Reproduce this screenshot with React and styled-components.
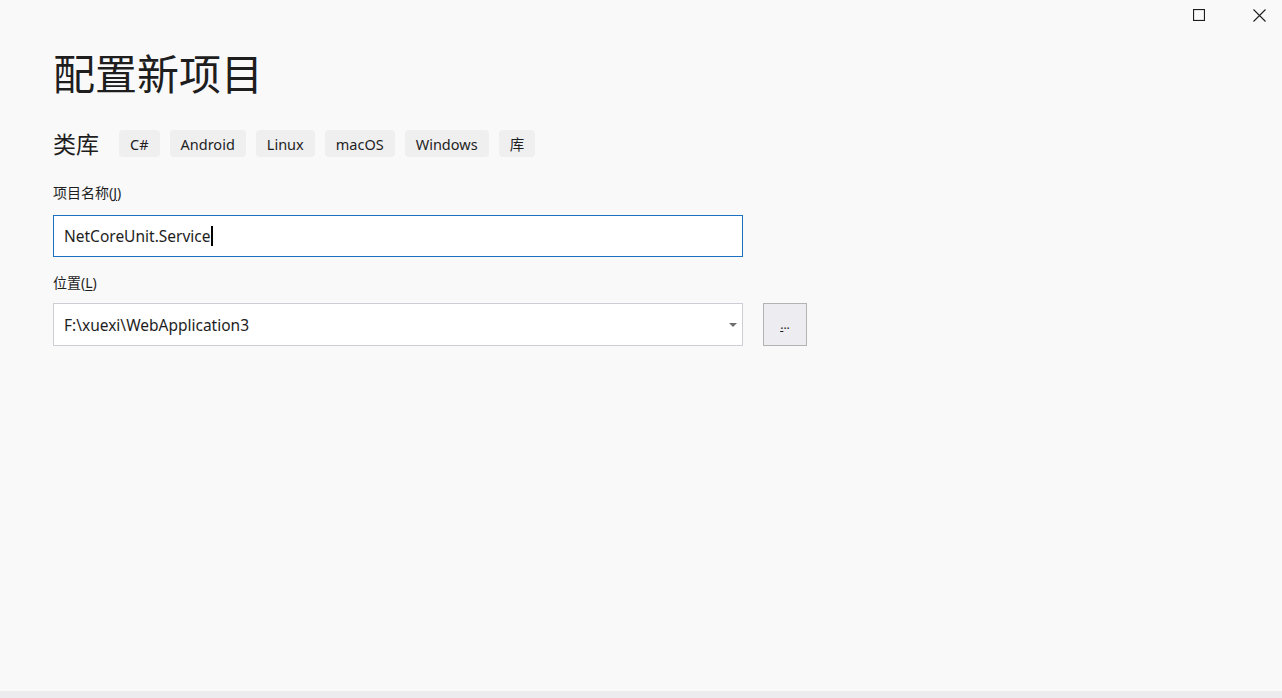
import React from "react";
import styled, { createGlobalStyle } from "styled-components";

const GlobalStyle = createGlobalStyle`
  html, body {
    margin: 0;
    padding: 0;
    background: #f9f9fa;
  }
  body {
    font-family: "Noto Sans", "Noto Sans CJK SC", sans-serif;
    color: #1e1e1e;
  }
`;

const Window = styled.div`
  width: 1282px;
  height: 698px;
  background: #f9f9fa;
  position: relative;
  display: flex;
  flex-direction: column;
  overflow: hidden;
`;

const TitleBar = styled.div`
  position: absolute;
  top: 0;
  right: 0;
  display: flex;
  gap: 14px;
`;

const WinButton = styled.div`
  width: 46px;
  height: 30px;
  display: flex;
  align-items: center;
  justify-content: center;
  color: #1e1e1e;
`;

const Content = styled.div`
  flex: 1;
  padding: 42px 0 0 53px;
  display: flex;
  flex-direction: column;
`;

const Heading = styled.h1`
  margin: 0;
  font-family: "Noto Sans CJK SC", sans-serif;
  font-weight: 400;
  font-size: 42px;
  line-height: 60px;
  color: #1e1e1e;
`;

const TagRow = styled.div`
  display: flex;
  align-items: center;
  gap: 10px;
  margin-top: 28px;
`;

const Category = styled.span`
  font-family: "Noto Sans CJK SC", sans-serif;
  font-size: 23px;
  line-height: 27px;
  margin-right: 10px;
`;

const Tag = styled.span`
  height: 27px;
  padding: 0 11px;
  display: inline-flex;
  align-items: center;
  background: #efeff0;
  border-radius: 4px;
  font-size: 14.5px;
  color: #1e1e1e;
`;

const Label = styled.div`
  font-family: "Noto Sans", "Noto Sans CJK SC", sans-serif;
  font-size: 14px;
  line-height: 20px;
  margin-top: ${(p) => p.$top}px;
  color: #1e1e1e;

  u {
    text-decoration: underline;
    text-underline-offset: 2px;
  }
`;

const FieldRow = styled.div`
  display: flex;
  align-items: center;
  gap: 20px;
  margin-top: ${(p) => p.$top}px;
`;

const Input = styled.div`
  width: 690px;
  height: ${(p) => p.$h}px;
  box-sizing: border-box;
  background: #ffffff;
  border: 1px solid ${(p) => (p.$focused ? "#1b71c2" : "#cdcdd5")};
  display: flex;
  align-items: center;
  padding: 0 10px;
  font-size: 15.5px;
  color: #1e1e1e;
  position: relative;
`;

const Caret = styled.span`
  display: inline-block;
  width: 2px;
  height: 20px;
  background: #000;
`;

const Arrow = styled.span`
  position: absolute;
  right: 5px;
  top: 50%;
  margin-top: -2px;
  width: 0;
  height: 0;
  border-left: 4px solid transparent;
  border-right: 4px solid transparent;
  border-top: 4px solid #6e6e6e;
`;

const BrowseButton = styled.button`
  width: 44px;
  height: 43px;
  box-sizing: border-box;
  background: #ececf1;
  border: 1px solid #b3b3b3;
  font-family: "Noto Sans", sans-serif;
  font-size: 12px;
  color: #1e1e1e;
  padding: 0;
  display: flex;
  align-items: center;
  justify-content: center;

  u {
    text-underline-offset: 2px;
  }
`;

const BottomStrip = styled.div`
  height: 7px;
  background: #ececef;
`;

const tags = ["C#", "Android", "Linux", "macOS", "Windows", "库"];

export default function App() {
  return (
    <>
      <GlobalStyle />
      <Window>
        <TitleBar>
          <WinButton>
            <svg width="12" height="12" viewBox="0 0 12 12">
              <rect x="0.5" y="0.5" width="11" height="11" fill="none" stroke="#1e1e1e" strokeWidth="1.2" />
            </svg>
          </WinButton>
          <WinButton>
            <svg width="13" height="13" viewBox="0 0 13 13">
              <path d="M0.5 0.5 L12.5 12.5 M12.5 0.5 L0.5 12.5" stroke="#1e1e1e" strokeWidth="1.1" />
            </svg>
          </WinButton>
        </TitleBar>
        <Content>
          <Heading>配置新项目</Heading>
          <TagRow>
            <Category>类库</Category>
            {tags.map((t) => (
              <Tag key={t}>{t}</Tag>
            ))}
          </TagRow>
          <Label $top={26}>
            项目名称(<u>J</u>)
          </Label>
          <FieldRow $top={12}>
            <Input $focused $h={42}>
              NetCoreUnit.Service
              <Caret />
            </Input>
          </FieldRow>
          <Label $top={16}>
            位置(<u>L</u>)
          </Label>
          <FieldRow $top={10}>
            <Input $h={43}>
              F:\xuexi\WebApplication3
              <Arrow />
            </Input>
            <BrowseButton>
              <u>.</u>..
            </BrowseButton>
          </FieldRow>
        </Content>
        <BottomStrip />
      </Window>
    </>
  );
}
